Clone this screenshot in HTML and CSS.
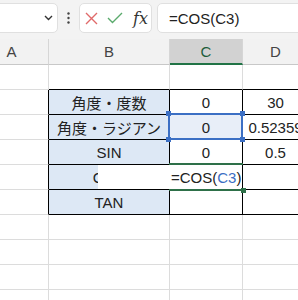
FILE: index.html
```html
<!DOCTYPE html>
<html lang="ja">
<head>
    <meta charset="UTF-8">
    <meta name="viewport" content="width=device-width, initial-scale=1.0">
    <title>COS</title>
    <link rel="stylesheet" href="styles.css">
</head>
<body>
    <div class="toolbar">
        <div class="name-box">
            <svg width="9" height="6" viewBox="0 0 9 6"><path d="M1 1L4.5 4.5L8 1" stroke="#333" stroke-width="1.4" fill="none"/></svg>
        </div>
        <div class="dots">
            <svg width="3" height="12" viewBox="0 0 3 12"><circle cx="1.5" cy="1.5" r="1.2" fill="#444"/><circle cx="1.5" cy="6" r="1.2" fill="#444"/><circle cx="1.5" cy="10.5" r="1.2" fill="#444"/></svg>
        </div>
        <div class="buttons-box">
            <svg class="btn-cancel" width="13" height="13" viewBox="0 0 13 13"><path d="M1 1L12 12M12 1L1 12" stroke="#e06a6a" stroke-width="1.4" fill="none"/></svg>
            <svg class="btn-enter" width="16" height="12" viewBox="0 0 16 12"><path d="M1 6L5.5 10.5L15 1" stroke="#5aaa6c" stroke-width="1.4" fill="none"/></svg>
            <span class="fx">fx</span>
        </div>
        <div class="formula-box">=COS(C3)</div>
    </div>

    <div class="sheet" id="sheet"></div>

    <script>
        const cols = ['A', 'B', 'C', 'D'];
        const rows = [
            ['', '', '', ''],
            ['', '角度・度数', '0', '30'],
            ['', '角度・ラジアン', '0', '0.52359'],
            ['', 'SIN', '0', '0.5'],
            ['', 'COS', '', ''],
            ['', 'TAN', '', ''],
            ['', '', '', ''],
            ['', '', '', ''],
            ['', '', '', ''],
            ['', '', '', '']
        ];

        function renderSheet() {
            const sheet = document.getElementById('sheet');
            let html = cols.map(c =>
                `<div class="cell head${c === 'C' ? ' active' : ''}">${c}</div>`
            ).join('');

            rows.forEach((row, r) => {
                const inTable = r >= 1 && r <= 5;
                row.forEach((value, c) => {
                    let cls = 'cell';
                    if (inTable && c === 1) cls += ' label';
                    if (inTable && c >= 0) cls += ' line-r';
                    if (inTable && c >= 1) cls += ' line-b';
                    if (r === 0 && c >= 1) cls += ' line-b';

                    let inner = value;
                    if (r === 2 && c === 2) {
                        cls += ' picked';
                        inner += '<div class="selection"><span class="handle tl"></span><span class="handle tr"></span><span class="handle bl"></span><span class="handle br"></span></div>';
                    }
                    if (r === 4 && c === 1) {
                        inner += '<div class="cover"></div>';
                    }
                    if (r === 4 && c === 2) {
                        cls += ' editing';
                        inner = '=COS(<span class="ref">C3</span>)<div class="editor-frame"></div>';
                    }
                    html += `<div class="${cls}">${inner}</div>`;
                });
            });

            sheet.innerHTML = html;
        }

        renderSheet();
    </script>
</body>
</html>
```

FILE: styles.css
```css
* {
    box-sizing: border-box;
}

body {
    margin: 0;
    overflow: hidden;
    background: #fff;
    color: #222;
    font-family: 'Liberation Sans', 'Noto Sans CJK JP', sans-serif;
}

.toolbar {
    display: flex;
    align-items: flex-start;
    height: 39px;
    padding-top: 3px;
    background: #f3f3f3;
}

.name-box {
    flex: none;
    width: 72px;
    height: 30px;
    margin-left: -14px;
    background: #fff;
    border: 1px solid #e0e0e0;
    border-radius: 5px;
    display: flex;
    align-items: center;
    justify-content: flex-end;
    padding-right: 4px;
}

.dots {
    flex: none;
    width: 21px;
    height: 30px;
    display: flex;
    align-items: center;
    justify-content: center;
}

.buttons-box {
    flex: none;
    width: 73px;
    height: 30px;
    background: #fff;
    border: 1px solid #e0e0e0;
    border-radius: 5px;
    display: flex;
    align-items: center;
    padding-left: 5px;
}

.btn-enter {
    margin-left: 9px;
}

.fx {
    margin-left: 10px;
    font-family: 'DejaVu Serif', 'Liberation Serif', serif;
    font-style: italic;
    font-size: 16px;
    color: #333;
}

.formula-box {
    flex: none;
    width: 160px;
    height: 30px;
    margin-left: 5px;
    background: #fff;
    border: 1px solid #e0e0e0;
    border-radius: 5px;
    display: flex;
    align-items: center;
    padding-left: 11px;
    font-size: 15px;
    color: #222;
}

.sheet {
    display: grid;
    grid-template-columns: 74px 121px 73px 66px;
    grid-template-rows: 26px;
    grid-auto-rows: 25px;
    margin-left: -25px;
}

.cell {
    position: relative;
    border-right: 1px solid #dcdcdc;
    border-bottom: 1px solid #dcdcdc;
    display: flex;
    align-items: center;
    justify-content: center;
    font-size: 15px;
    white-space: nowrap;
}

.head {
    background: #f2f2f2;
    color: #444;
    border-right-color: #d6d6d6;
    border-bottom-color: #c8c8c8;
}

.head.active {
    background: #d2d2d2;
    color: #1d5c3a;
    border-bottom: 2px solid #217346;
}

.label {
    background: #dde8f5;
}

.line-r {
    border-right-color: #000;
}

.line-b {
    border-bottom-color: #000;
}

.picked {
    background: #e8eef8;
}

.selection {
    position: absolute;
    top: -2px;
    left: -2px;
    right: -1px;
    bottom: -1px;
    border: 2px solid #3b6fc4;
    z-index: 2;
}

.handle {
    position: absolute;
    width: 5px;
    height: 5px;
    background: #3b6fc4;
}

.tl { left: -4px; top: -4px; }
.tr { right: -4px; top: -4px; }
.bl { left: -4px; bottom: -4px; }
.br { right: -4px; bottom: -4px; }

.cover {
    position: absolute;
    top: 0;
    bottom: 0;
    right: -1px;
    width: 72px;
    background: #fff;
    z-index: 1;
}

.editing {
    justify-content: flex-start;
    padding-left: 1px;
    background: #fff;
}

.ref {
    color: #3b6fc4;
}

.editor-frame {
    position: absolute;
    top: -2px;
    left: -1px;
    right: -1px;
    bottom: -2px;
    border-top: 2px solid #2e7049;
    border-bottom: 2px solid #2e7049;
    z-index: 2;
}

.editor-frame::after {
    content: '';
    position: absolute;
    right: -3px;
    bottom: -4px;
    width: 5px;
    height: 5px;
    background: #2e7049;
}
```
